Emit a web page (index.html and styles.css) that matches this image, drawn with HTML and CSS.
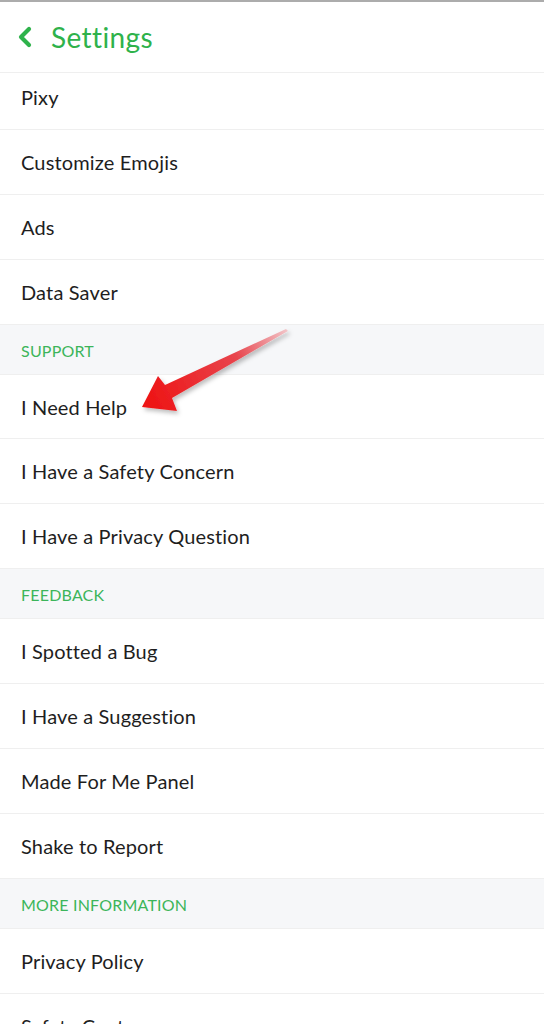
FILE: index.html
```html
<!DOCTYPE html>
<html lang="en">
<head>
	<meta charset="UTF-8">
	<title>Settings</title>
<link rel="stylesheet" href="styles.css">
</head>
<body>
<div class="page">
	<div class="topbar">
		<svg class="back" width="16" height="22" viewBox="0 0 16 22"><path d="M12 3 L4 11 L12 19" fill="none" stroke="#2eb24b" stroke-width="4.2" stroke-linecap="round" stroke-linejoin="round"/></svg>
		<span class="title">Settings</span>
	</div>
	<div class="list">
		<div class="row first">Pixy</div>
		<div class="row">Customize Emojis</div>
		<div class="row">Ads</div>
		<div class="row">Data Saver</div>
		<div class="section">SUPPORT</div>
		<div class="row">I Need Help</div>
		<div class="row">I Have a Safety Concern</div>
		<div class="row">I Have a Privacy Question</div>
		<div class="section">FEEDBACK</div>
		<div class="row">I Spotted a Bug</div>
		<div class="row">I Have a Suggestion</div>
		<div class="row">Made For Me Panel</div>
		<div class="row">Shake to Report</div>
		<div class="section">MORE INFORMATION</div>
		<div class="row">Privacy Policy</div>
		<div class="row">Safety Center</div>
	</div>
	<svg class="arrow" width="544" height="1024" viewBox="0 0 544 1024">
		<defs>
			<linearGradient id="ag" x1="287" y1="330" x2="142" y2="405" gradientUnits="userSpaceOnUse">
				<stop offset="0" stop-color="#f2c4c8"/>
				<stop offset="0.35" stop-color="#e8454d"/>
				<stop offset="1" stop-color="#ee1111"/>
			</linearGradient>
			<filter id="sh" x="-20%" y="-20%" width="140%" height="140%">
				<feDropShadow dx="2" dy="3" stdDeviation="2" flood-color="#000" flood-opacity="0.25"/>
			</filter>
		</defs>
		<polygon filter="url(#sh)" fill="url(#ag)" points="142,407 158,376 165,385 286,329 288,331 172,398 177,411"/>
	</svg>
</div>
</body>
</html>
```

FILE: styles.css
```css
body{margin:0;background:#fff;font-family:Lato,"Open Sans",sans-serif;}
.page{position:relative;width:544px;height:1024px;overflow:hidden;border-top:2px solid #acacac;box-sizing:border-box;}
.topbar{position:relative;z-index:1;height:71px;background:#fff;display:flex;align-items:center;padding-left:17px;border-bottom:1px solid #efefef;box-sizing:border-box;}
.back{margin-right:18px;margin-top:0;}
.title{color:#2eb24b;font-size:28px;letter-spacing:0.4px;}
.list{margin-top:-8px;}
.row{height:64.9px;line-height:65px;padding-left:21px;font-size:20px;color:#1e1e1e;border-bottom:1px solid #efefef;box-sizing:border-box;letter-spacing:0.15px;}
.section{height:50px;line-height:51px;padding-left:21px;background:#f6f7f9;color:#3cb55a;font-size:16px;border-bottom:1px solid #efefef;box-sizing:border-box;letter-spacing:0.2px;}
.arrow{position:absolute;left:0;top:-2px;pointer-events:none;}
```
